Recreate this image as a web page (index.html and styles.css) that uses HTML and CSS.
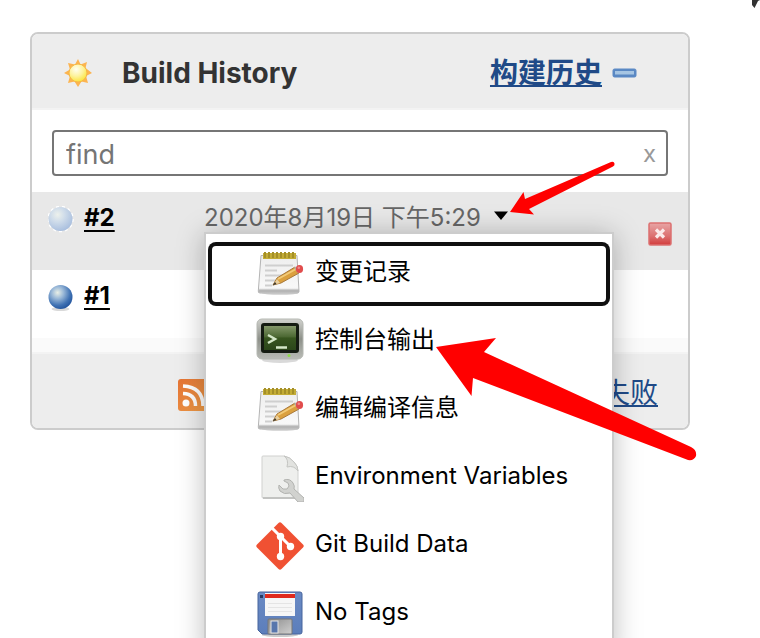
FILE: index.html
```html
<!DOCTYPE html>
<html lang="zh-CN">
<head>
<meta charset="utf-8">
<title>Build History</title>
<link rel="stylesheet" href="styles.css">
</head>
<body>
<svg class="defs" width="0" height="0" aria-hidden="true">
  <defs>
    <radialGradient id="sun" cx=".4" cy=".3" r=".75"><stop offset="0" stop-color="#fffef0"/><stop offset=".5" stop-color="#fdf3a0"/><stop offset="1" stop-color="#fbe22f"/></radialGradient>
    <radialGradient id="blue" cx=".38" cy=".32" r=".7"><stop offset="0" stop-color="#e9efe6"/><stop offset=".35" stop-color="#9bb9d8"/><stop offset=".75" stop-color="#4173b4"/><stop offset="1" stop-color="#24569f"/></radialGradient>
    <radialGradient id="pale" cx=".38" cy=".32" r=".75"><stop offset="0" stop-color="#edf1ec"/><stop offset=".4" stop-color="#cfdcea"/><stop offset="1" stop-color="#a4bbdd"/></radialGradient>
    <linearGradient id="red" x2="0" y2="1"><stop offset="0" stop-color="#e8a5a5"/><stop offset=".6" stop-color="#dc7070"/><stop offset="1" stop-color="#d23b3b"/></linearGradient>
    <linearGradient id="orange" x2="1" y2="1"><stop offset="0" stop-color="#e57334"/><stop offset="1" stop-color="#f0a04a"/></linearGradient>
    <linearGradient id="paper" x2="0" y2="1"><stop offset="0" stop-color="#eeeeee"/><stop offset=".85" stop-color="#f8f8f8"/><stop offset="1" stop-color="#c4c4c4"/></linearGradient>
    <linearGradient id="case" x2="0" y2="1"><stop offset="0" stop-color="#d2d3cf"/><stop offset=".5" stop-color="#8e918a"/><stop offset="1" stop-color="#b9bbb6"/></linearGradient>
    <linearGradient id="screen" x2="0" y2="1"><stop offset="0" stop-color="#84986a"/><stop offset=".45" stop-color="#4c6833"/><stop offset=".5" stop-color="#37551f"/><stop offset="1" stop-color="#2b461a"/></linearGradient>
    <linearGradient id="disk" x2="0" y2="1"><stop offset="0" stop-color="#6a8ac4"/><stop offset="1" stop-color="#5c7ebb"/></linearGradient>
    <linearGradient id="metal" x2="1" y2="1"><stop offset="0" stop-color="#8d8d8d"/><stop offset="1" stop-color="#d0d0d0"/></linearGradient>
    <symbol id="notepad" viewBox="0 0 48 48">
      <ellipse cx="24" cy="43" rx="18" ry="2" fill="#000" opacity=".15"/>
      <path d="M5 5.500H41L43 41.500Q43 43 41 43H4Q2 43 2.300 41Z" fill="url(#paper)" stroke="#b4b4b4"/>
      <path d="M3 39.500H43V42H3Z" fill="#b6b6b6"/>
      <path d="M9 15.500H37M9 20.500H21M9 25.500H28M9 30.500H22M9 35.500H16" stroke="#cfcfcf" stroke-width="2"/>
      <path d="M7 3H40V9H7Z" fill="#c3ac36"/>
      <path d="M9 2V8M13 2V8M17 2V8M21 2V8M25 2V8M29 2V8M33 2V8M37 2V8" stroke="#a48f28" stroke-width="2"/>
      <path d="M17 35L21 28L39 17L43 23L25 33Z" fill="#dba03e" stroke="#a8783a"/>
      <path d="M22 29L40 19" stroke="#f2ca77" stroke-width="2"/>
      <path d="M17 35L21 29L24 33Z" fill="#e9cf9d"/><path d="M16.500 35.500L19 32L20.500 34Z" fill="#3c3529"/>
      <path d="M38 17.500L40 16.500L44 22L42 23.500Z" fill="#b0b0a8"/>
      <ellipse cx="43.500" cy="19" rx="3.600" ry="3.900" fill="#e14c4c"/>
      <circle cx="42.800" cy="17.800" r="1.300" fill="#ee8b8b"/>
    </symbol>
  </defs>
</svg>

<main class="page">
  <section class="card">
    <header class="head">
      <svg class="sun" viewBox="0 0 28 28" aria-hidden="true">
        <path d="M14 0L16.600 5.500L23 3L21.500 9L28 14L22 17L24 24L17.500 22.500L14 28L10.500 22.500L4 24L6 17L0 14L6 10.500L4 4L11 5.500Z" fill="#fcb451"/>
        <circle cx="14" cy="14" r="9" fill="url(#sun)" stroke="#f5b846"/>
      </svg>
      <h1>Build History</h1>
      <a class="trend" href="#">构建历史</a>
      <button class="fold" type="button" aria-label="-">
        <svg viewBox="0 0 26 10" aria-hidden="true"><rect x="1" y="1" width="23" height="8" rx="1.500" fill="#5a88c3" stroke="#5b89c5"/><rect x="3" y="3" width="19" height="3.500" fill="#a6c5e3"/></svg>
      </button>
    </header>

    <div class="search">
      <input type="text" placeholder="find" aria-label="find">
      <button type="button">x</button>
    </div>

    <ul class="builds">
      <li class="build active">
        <svg class="ball" viewBox="0 0 28 28" aria-hidden="true"><circle cx="12.500" cy="13" r="12.500" fill="none" stroke="#fff" stroke-width="1.500" stroke-dasharray="3 3"/><circle cx="12.500" cy="13" r="12" fill="url(#pale)"/></svg>
        <a class="number" href="#">#2</a>
        <div class="when">
          <time datetime="2020-08-19T17:29">2020年8月19日 下午5:29</time>
          <svg class="caret" viewBox="0 0 16 10" aria-hidden="true"><path d="M1 .500H15L8 9Z"/></svg>
          <nav class="menu">
            <a class="item focused" href="#"><svg viewBox="0 0 48 48" aria-hidden="true"><use href="#notepad"/></svg>变更记录</a>
            <a class="item" href="#"><svg viewBox="0 0 48 48" aria-hidden="true">
              <ellipse cx="24" cy="42" rx="18" ry="3" fill="#000" opacity=".15"/>
              <rect x="1" y="1" width="46" height="40" rx="5" fill="url(#case)" stroke="#b5b8b2"/>
              <rect x="5" y="5" width="38" height="30" rx="3" fill="#151c12"/>
              <rect x="8" y="8" width="32" height="24" fill="url(#screen)"/>
              <path d="M12 17L19 21L12 25" fill="none" stroke="#d4e7c8" stroke-width="2.500"/><path d="M20 29.500H31" stroke="#d4e7c8" stroke-width="2.500"/>
              <circle cx="33" cy="37.500" r="1.500" fill="#8edc4a"/></svg>控制台输出</a>
            <a class="item" href="#"><svg viewBox="0 0 48 48" aria-hidden="true"><use href="#notepad"/></svg>编辑编译信息</a>
            <a class="item" href="#"><svg viewBox="0 0 48 48" aria-hidden="true">
              <path d="M7 2H28Q34 3 38 8Q42 12 42 17V44H7Q6 44 6 43V3Q6 2 7 2Z" fill="#eeefed" stroke="#d0d1cf"/>
              <path d="M7 44H42" stroke="#c2c3c1" stroke-width="2"/>
              <path d="M28 2Q33 5 31 13Q38 11 42 17Q42 12 38 8Q34 3 28 2Z" fill="#e2e3e0" stroke="#c4c5c2"/>
              <path d="M28 26Q34 24 37 29Q39 32 38 35L48 44V48H42L34 39Q28 41 24 37Q22 34 23 31L27 35H31L33 32L32 29L28 27Z" fill="#d1d2cf" stroke="#b2b3b0"/></svg>Environment Variables</a>
            <a class="item" href="#"><svg viewBox="0 0 48 48" aria-hidden="true">
              <path d="M22.500 1Q24 -.500 25.500 1L47 22.500Q48.500 24 47 25.500L25.500 47Q24 48.500 22.500 47L1 25.500Q-.500 24 1 22.500Z" fill="#f05133"/>
              <path d="M16 6L24.500 14.500L34.500 24.500M24.500 15V34" fill="none" stroke="#fff" stroke-width="3"/>
              <circle cx="24.500" cy="14.500" r="3.700" fill="#fff"/><circle cx="34.500" cy="24.500" r="3.700" fill="#fff"/><circle cx="24.500" cy="34.500" r="3.700" fill="#fff"/></svg>Git Build Data</a>
            <a class="item" href="#"><svg viewBox="0 0 48 48" aria-hidden="true">
              <ellipse cx="24" cy="45" rx="18" ry="2" fill="#000" opacity=".2"/>
              <path d="M4 2H44Q46 2 46 4V42Q46 44 44 44H6L2 40V4Q2 2 4 2Z" fill="url(#disk)" stroke="#46649d"/>
              <rect x="9" y="3" width="30" height="23" fill="#f6f6f6"/><rect x="9" y="4" width="30" height="4" fill="#e02a1d"/>
              <path d="M12 13.500H36M12 17.500H36M12 21.500H36" stroke="#e4e4e4"/>
              <rect x="12" y="29" width="24" height="15" rx="1" fill="url(#metal)" stroke="#777"/><rect x="15" y="31" width="7" height="12" fill="#5876ac" stroke="#e5e5e5"/>
              <rect x="4" y="5" width="3" height="3" fill="#283b63"/></svg>No Tags</a>
          </nav>
        </div>
        <button class="stop" type="button" aria-label="x">
          <svg viewBox="0 0 24 24" aria-hidden="true"><rect x="1" y="1" width="22" height="22" rx="1.500" fill="url(#red)" stroke="#dc7070" stroke-width="1.500"/><path d="M8 7.500L16 15.500M16 7.500L8 15.500" stroke="#fbeaea" stroke-width="3.200"/></svg>
        </button>
      </li>
      <li class="build">
        <svg class="ball" viewBox="0 0 28 28" aria-hidden="true"><ellipse cx="12.500" cy="25" rx="9" ry="2" fill="#000" opacity=".15"/><circle cx="12.500" cy="13" r="12" fill="url(#blue)"/></svg>
        <a class="number" href="#">#1</a>
      </li>
    </ul>
    <div class="spacer"></div>

    <footer class="feeds">
      <svg class="rss" viewBox="0 0 32 32" aria-hidden="true"><rect width="32" height="32" rx="3" fill="url(#orange)"/><circle cx="8" cy="24" r="3.500" fill="#fff"/><path d="M5 14.500Q17.500 15 17.500 27M5 7Q25 8 25 27" fill="none" stroke="#fff" stroke-width="3.500"/></svg>
      <a href="#">失败</a>
    </footer>
  </section>

  <svg class="marks" width="760" height="638" viewBox="0 0 760 638" aria-hidden="true">
    <path d="M752 0H760L758 1L754.500 8L752 5Z" fill="#333"/>
    <path d="M510 212L523.500 192L525 199L611 162Q614 161 614.500 163.500Q615 165.500 613 166.500L529 209L534 214.500Z" fill="#f00"/>
    <path d="M436 347L496 338L484 352L691 447Q697 450 696 456Q694 461 688 460L473 378L471.500 396Z" fill="#f00"/>
  </svg>
</main>
</body>
</html>
```
FILE: styles.css
```css
* { box-sizing: border-box; }
body {
  margin: 0;
  background: #fff;
  color: #000;
  font: 24px/32px Inter, "Noto Sans CJK SC", sans-serif;
}
svg { display: block; }
button { padding: 0; border: 0; background: none; font: inherit; cursor: pointer; }
.defs { position: absolute; }
.page {
  position: relative;
  height: 100vh;
  padding: 32px 70px 0 30px;
  overflow: hidden;
}
.card { border: 2px solid #ccc; border-radius: 8px; background: #fff; }

.head {
  display: flex;
  align-items: center;
  height: 76px;
  padding: 4px 50px 0 32px;
  border-bottom: 2px solid #f3f3f3;
  border-radius: 6px 6px 0 0;
  background: #ededed;
}
.sun { width: 28px; height: 28px; }
h1 { flex: 1; margin: 0 0 0 30px; color: #333; font-size: 28px; font-weight: 700; }
.trend { margin-right: 10px; color: #204a87; font-size: 28px; font-weight: 700; text-underline-offset: 2px; }
.fold svg { width: 26px; height: 10px; }

.search { position: relative; padding: 20px 20px 16px; }
.search input {
  display: block;
  width: 100%;
  height: 46px;
  padding: 2px 40px 0 12px;
  border: 2px solid #767676;
  border-radius: 4px;
  background: #fff;
  font: inherit;
  font-size: 27px;
}
.search input::placeholder { color: #757575; opacity: 1; }
.search button { position: absolute; top: 28px; right: 32px; color: #999; }

.builds { margin: 0; padding: 0; list-style: none; }
.build {
  display: grid;
  grid-template-columns: 28px 112px 1fr auto;
  column-gap: 8px;
  align-items: start;
  min-height: 68px;
  padding: 10px 16px 0;
}
.build.active { min-height: 78px; background: #e8e8e8; }
.ball { width: 28px; height: 28px; margin-top: 4px; }
.number { color: #000; font-weight: 700; text-underline-offset: 4px; }
.when { display: flex; position: relative; align-items: center; gap: 12px; color: #666; white-space: nowrap; }
.caret { width: 16px; height: 10px; margin-bottom: 4px; fill: #000; }
.stop { margin-top: 20px; }
.stop svg { width: 24px; height: 24px; }
.spacer { height: 14px; background: #fafafa; }

.menu {
  position: absolute;
  z-index: 1;
  top: 30px;
  left: 0;
  width: 410px;
  padding: 6px 2px;
  border: 2px solid #ccc;
  background: #fff;
  box-shadow: 0 2px 26px rgba(0, 0, 0, .26);
}
.item {
  display: flex;
  align-items: center;
  gap: 11px;
  height: 64px;
  margin: 2px 0 4px;
  padding: 0 0 4px 48px;
  border-radius: 8px;
  color: #000;
  text-decoration: none;
}
.item svg { width: 48px; height: 48px; margin-top: 4px; }
.focused { box-shadow: inset 0 0 0 4px #101010; }

.feeds {
  display: flex;
  align-items: center;
  justify-content: space-between;
  height: 76px;
  padding: 4px 30px 0 146px;
  border-top: 2px solid #f3f3f3;
  border-radius: 0 0 6px 6px;
  background: #ededed;
}
.rss { width: 32px; height: 32px; margin-top: 4px; }
.feeds a { color: #204a87; font-size: 28px; text-underline-offset: 2px; }
.marks { position: absolute; z-index: 2; top: 0; left: 0; pointer-events: none; }
```
